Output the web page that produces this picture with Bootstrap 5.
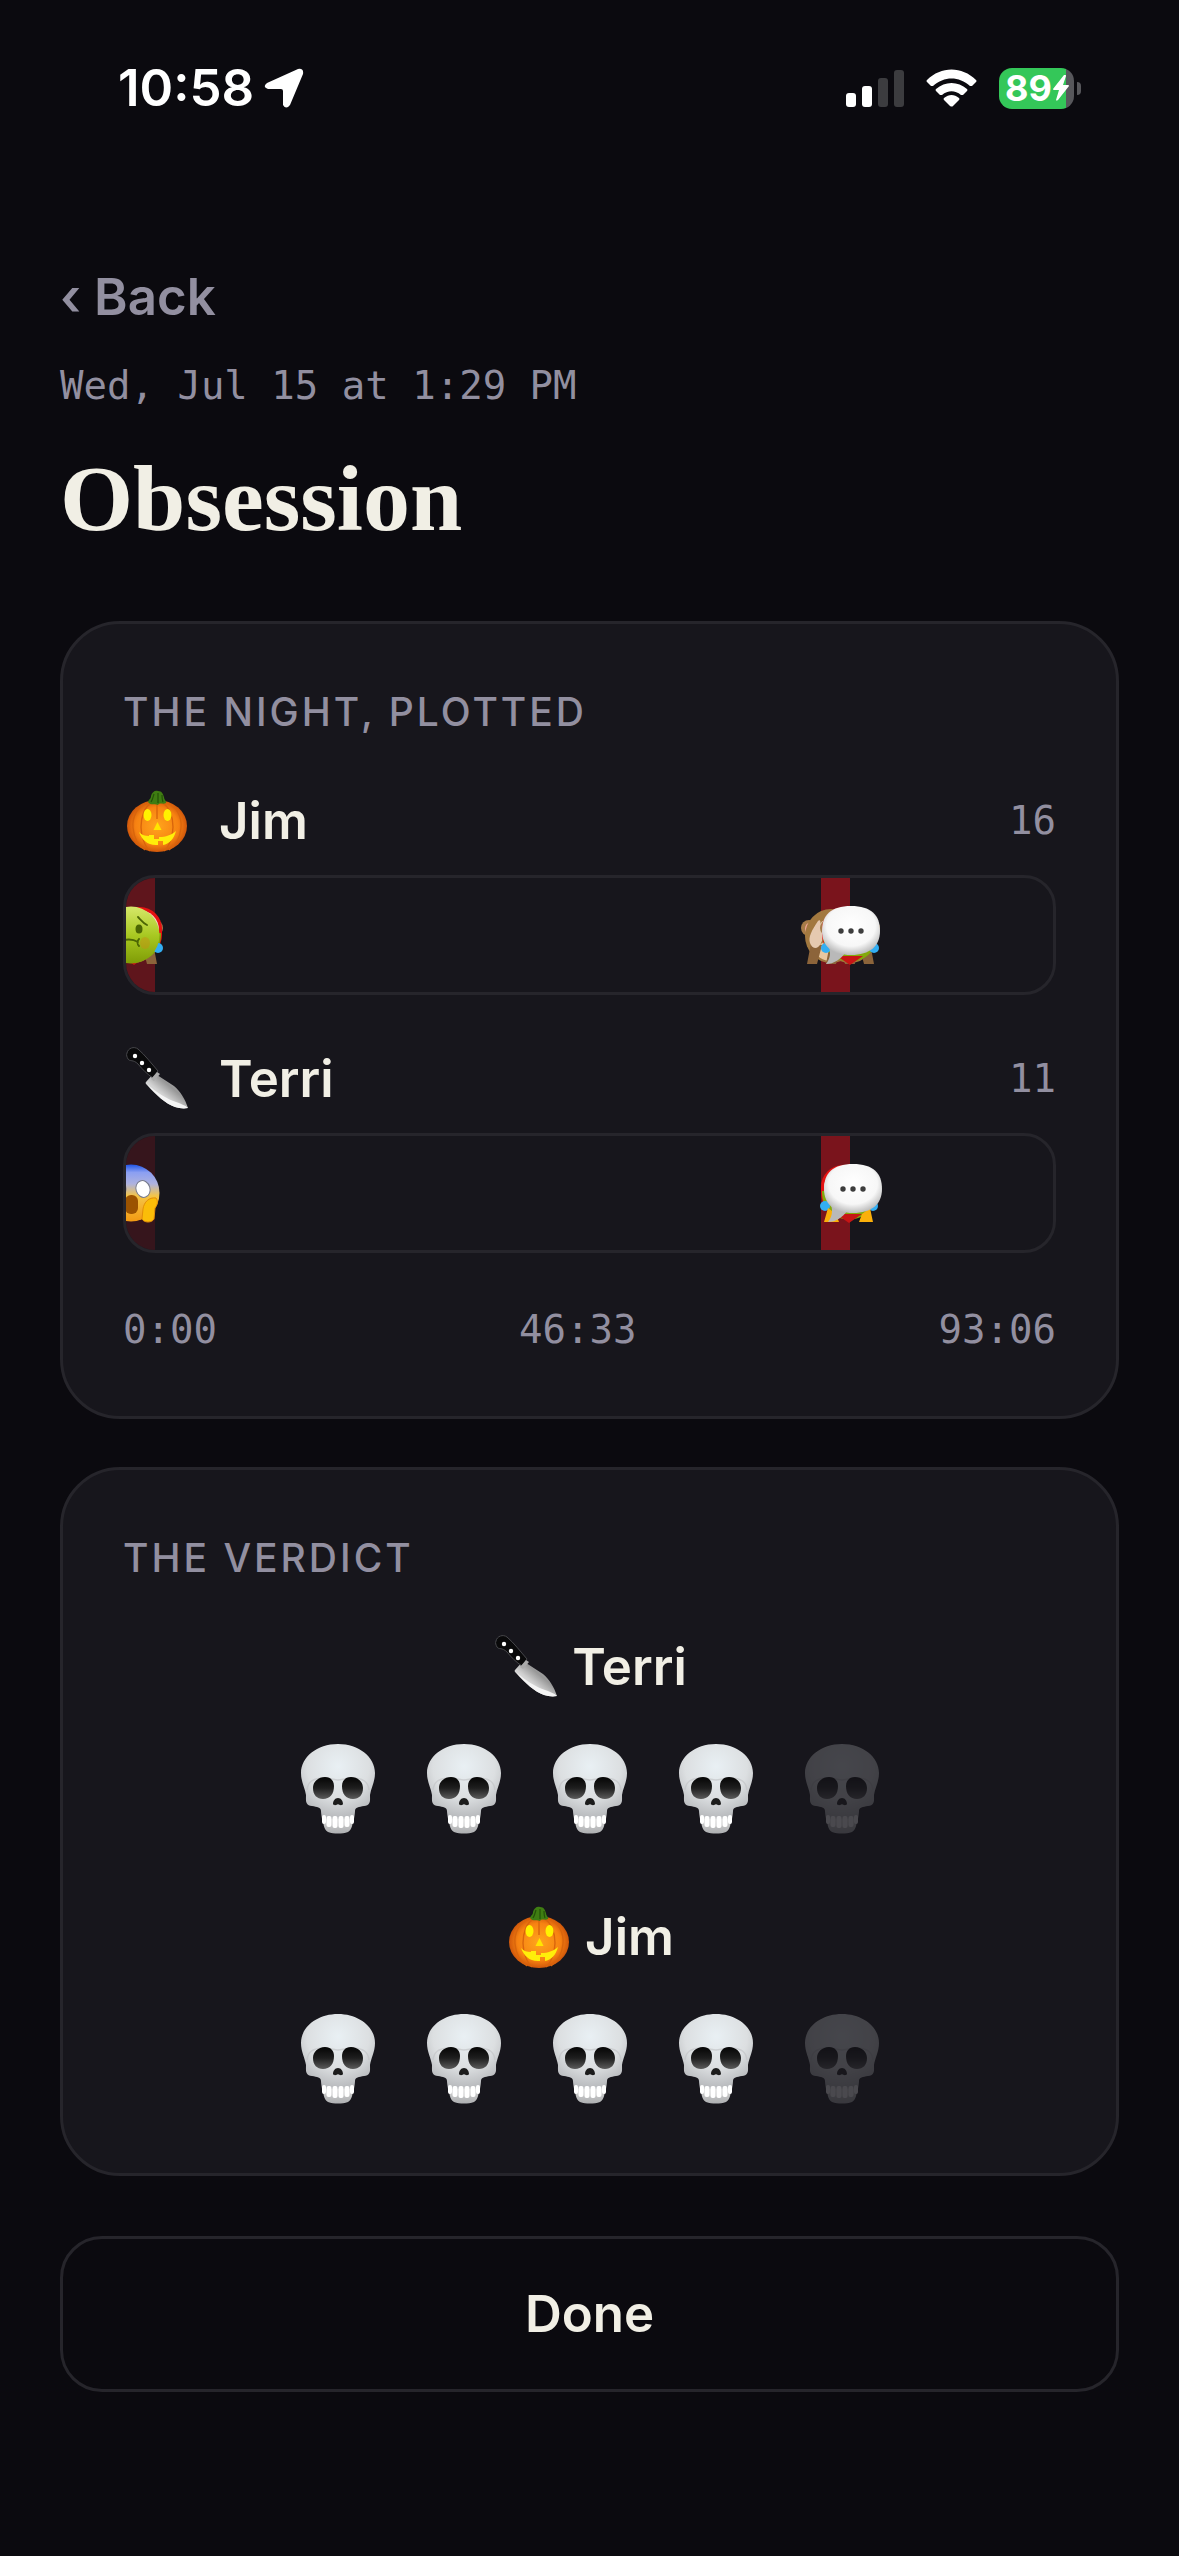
<!DOCTYPE html>
<html lang="en">
<head>
    <meta charset="UTF-8" />
    <meta name="viewport" content="width=device-width, initial-scale=1" />
    <title>Obsession</title>
    <link href="https://cdn.jsdelivr.net/npm/bootstrap@5.3.0/dist/css/bootstrap.min.css" rel="stylesheet"/>
    <style>
        :root {
            --ink: #0b0a0f;
            --panel: #17161c;
            --line: #26252b;
            --cream: #f1efe5;
            --muted: #928fa0;
        }
        body {
            background: var(--ink); color: var(--cream);
            font-family: Inter, "Liberation Sans", sans-serif;
            font-size: 51px; line-height: 60px; font-weight: 600;
        }
        svg { display: block; flex: none; }

        .status-bar { height: 176px; padding: 0 98px 0 118px; color: #fff; }
        .status-time { gap: 10px; }
        .status-icons { gap: 22px; }
        .battery { gap: 3px; }
        .battery-body {
            width: 75px; height: 41px; border-radius: 13px; padding-left: 6px;
            background: linear-gradient(to right, #34c759 89%, #57575b 89%);
            font-size: 36px; line-height: 41px; font-weight: 700;
        }
        .battery-nub { width: 4px; height: 13px; background: #57575b; border-radius: 0 6px 6px 0; }

        .screen { padding: 88px 60px 160px; }
        .back-btn { color: var(--muted); line-height: 66px; }
        .mono { font-family: "DejaVu Sans Mono", monospace; font-size: 39px; line-height: 52px; font-weight: 400; color: var(--muted); }
        .screen-date { margin-top: 30px; }
        .screen-title { font-family: "Liberation Serif", serif; font-size: 94px; line-height: 112px; font-weight: 700; margin: 30px 0 67px; }

        .panel { background: var(--panel); border: 3px solid var(--line); border-radius: 60px; padding: 60px; margin-bottom: 48px; }
        .panel-title { font-size: 39px; line-height: 56px; font-weight: 500; letter-spacing: 3px; color: var(--muted); margin-bottom: 48px; }
        .viewer + .viewer { margin-top: 51px; }
        .viewer-name { gap: 30px; }
        .track { height: 120px; margin-top: 21px; border: 3px solid var(--line); border-radius: 32px; }
        .bin { flex: 1; background: #94141d; }
        .pin { position: absolute; top: 50%; transform: translate(-50%, -50%); }
        .axis { margin-top: 51px; }

        .verdict + .verdict { margin-top: 61px; }
        .verdict-name { gap: 14px; }
        .skulls { gap: 18px; margin-top: 35px; }
        .skull-btn { width: 108px; height: 108px; border: 0; background: none; padding: 0; }
        .skull-btn.off { opacity: .22; }

        .done-btn { margin-top: 60px; height: 156px; border: 3px solid var(--line); border-radius: 42px; color: var(--cream); }
        .back-btn, .done-btn { font-size: 51px; font-weight: 600; }
        .back-btn:hover { color: var(--cream); }
        .done-btn:hover { background: var(--panel); color: var(--cream); }
    </style>
</head>
<body>

<!-- shared artwork -->
<svg width="0" height="0" class="position-absolute" aria-hidden="true">
    <defs>
        <radialGradient id="g-pumpkin" cx=".5" cy=".5" r=".55">
            <stop offset="0" stop-color="#ffa51c"/><stop offset=".65" stop-color="#f78212"/><stop offset="1" stop-color="#c24808"/>
        </radialGradient>
        <linearGradient id="g-blade" x1="0" y1="1" x2="1" y2="0">
            <stop offset="0" stop-color="#fff"/><stop offset=".4" stop-color="#d2d2d2"/><stop offset=".6" stop-color="#979797"/><stop offset="1" stop-color="#c8c8c8"/>
        </linearGradient>
        <radialGradient id="g-bone" cx=".5" cy=".3" r=".7">
            <stop offset="0" stop-color="#e9f0f4"/><stop offset=".6" stop-color="#dcdfe1"/><stop offset="1" stop-color="#b6b8bb"/>
        </radialGradient>
        <linearGradient id="g-jaw" x1="0" y1="0" x2="0" y2="1">
            <stop offset="0" stop-color="#dadada"/><stop offset=".55" stop-color="#cfcfcf"/><stop offset="1" stop-color="#aeb0b2"/>
        </linearGradient>
        <linearGradient id="g-socket" x1="0" y1="0" x2="0" y2="1">
            <stop offset="0" stop-color="#050505"/><stop offset=".5" stop-color="#1e1e1e"/><stop offset="1" stop-color="#5b5b5b"/>
        </linearGradient>
        <linearGradient id="g-sick" x1="0" y1="0" x2="0" y2="1">
            <stop offset="0" stop-color="#d6e86a"/><stop offset=".5" stop-color="#a9c922"/><stop offset="1" stop-color="#7f9c06"/>
        </linearGradient>
        <linearGradient id="g-fear" x1="0" y1="0" x2="0" y2="1">
            <stop offset="0" stop-color="#1f55e6"/><stop offset=".14" stop-color="#8b9ff2"/><stop offset=".34" stop-color="#aeb2df"/><stop offset=".55" stop-color="#f4c548"/><stop offset="1" stop-color="#f39a12"/>
        </linearGradient>
        <radialGradient id="g-bubble" cx=".5" cy=".4" r=".6">
            <stop offset="0" stop-color="#fff"/><stop offset=".7" stop-color="#f7f7f7"/><stop offset="1" stop-color="#bdbdbd"/>
        </radialGradient>
    </defs>

    <symbol id="pumpkin" viewBox="0 0 66 66">
        <ellipse cx="34" cy="38" rx="30" ry="26" fill="url(#g-pumpkin)"/>
        <g fill="none" stroke="#d9650c" stroke-width="1.4">
            <path d="M28 14C14 16 9 30 10 40s6 18 12 22"/><path d="M30 14c-9 4-12 16-12 25s4 20 9 24"/>
            <path d="M40 14c14 2 19 16 18 26s-6 18-12 22"/><path d="M38 14c9 4 12 16 12 25s-4 20-9 24"/><path d="M34 15v16"/>
        </g>
        <path d="M25 14c1-3 3-3 3-6 1-4 4-6 7-5 4 0 5 3 6 6 0 3 3 4 2 6-3 2-6-1-8 2-3-2-7 1-10-3z" fill="#3f7d12"/>
        <path d="M31 6c-1 3-1 5-3 8M35 5v10M39 7c0 3 0 5 1 7" fill="none" stroke="#245208" stroke-width="1.2"/>
        <ellipse cx="24.500" cy="27" rx="4" ry="6" fill="#fff200"/>
        <ellipse cx="44.500" cy="27" rx="4" ry="6" fill="#fff200"/>
        <path d="M34.500 34l4 8h-8z" fill="#ffe600"/>
        <path d="M16 44c3 3 6 4 10 4v-1h5v4h5v-2c7 0 12-2 17-6-2 8-7 13-13 14v-4h-5v4C25 58 19 52 16 44z" fill="#ffee0a"/>
    </symbol>

    <symbol id="knife" viewBox="0 0 66 66">
        <path d="M31 27l-8 9c-1 1 0 2 1 3 9 10 19 19 28 22 4 1 8 2 13 1-3-9-7-16-14-22z" fill="url(#g-blade)"/>
        <path d="M24 38c10 9 20 15 29 18 5 2 9 3 12 6-5 1-9 0-13-1-9-3-19-12-28-23z" fill="#f4f4f4"/>
        <path d="M4 7c1-5 7-7 11-4 7 6 13 14 20 22l-5 7c-6-4-10-8-15-14C10 13 7 16 5 13c-1-2-2-4-1-6z" fill="#09090a" stroke="#47474b"/>
        <path d="M34 26l-6 7 3 2 6-7z" fill="#aaa"/>
        <circle cx="12" cy="10" r="2.200" fill="#fff"/><circle cx="19" cy="17" r="2.200" fill="#fff"/><circle cx="26" cy="24" r="2.200" fill="#fff"/>
    </symbol>

    <symbol id="skull" viewBox="0 0 74 90">
        <path d="M20 60l1 14c2 5 1 11 6 14 6 2 14 2 20 0 5-3 4-9 6-14l1-14z" fill="url(#g-jaw)"/>
        <path d="M37 0C58 0 74 13 74 29c0 9-4 15-5 22 0 6 1 10-6 11-5 1-9 1-9 5l-1 8H21l-1-8c0-4-4-4-9-5-7-1-6-5-6-11C4 44 0 38 0 29 0 13 16 0 37 0z" fill="url(#g-bone)"/>
        <path d="M6 46c1-9 6-11 15-12 8 0 12 2 16 2s8-2 16-2c9 1 14 3 15 12" fill="none" stroke="#c3c5c8" stroke-width="1.500" opacity=".7"/>
        <path d="M12 44c0-6 5-11 12-11 6 0 9 4 9 9 0 8-4 13-11 13-6 0-10-4-10-11zM62 44c0-6-5-11-12-11-6 0-9 4-9 9 0 8 4 13 11 13 6 0 10-4 10-11z" fill="url(#g-socket)"/>
        <path d="M37 54c3 0 5 3 5 6-1 2-4 1-5 0-1 1-4 2-5 0 0-3 2-6 5-6z" fill="#1c1c1c"/>
        <g fill="#fff">
            <rect x="21" y="71" width="4" height="9" rx="2"/><rect x="25.500" y="72" width="5" height="11" rx="2"/><rect x="31.500" y="72" width="5" height="12" rx="2"/>
            <rect x="37.500" y="72" width="5" height="12" rx="2"/><rect x="43.500" y="72" width="5" height="11" rx="2"/><rect x="49" y="71" width="4" height="9" rx="2"/>
        </g>
    </symbol>

    <symbol id="sick" viewBox="0 0 60 60">
        <circle cx="30" cy="30" r="28.500" fill="url(#g-sick)"/>
        <ellipse cx="44" cy="38" rx="5" ry="6" fill="#c88d12" opacity=".45"/>
        <ellipse cx="22" cy="24" rx="3" ry="4.500" fill="#4c6604"/><ellipse cx="38" cy="24" rx="3.500" ry="4.500" fill="#4c6604"/>
        <path d="M37 12c3 3 5 6 9 8M22 12c-3 3-5 6-9 8M18 38c6-5 14-4 19-1M38 34c-2 2-2 5 0 7" fill="none" stroke="#4c6604" stroke-width="1.800" stroke-linecap="round"/>
    </symbol>

    <symbol id="fear" viewBox="0 0 60 60">
        <circle cx="30" cy="30" r="28.500" fill="url(#g-fear)"/>
        <ellipse cx="18" cy="26" rx="7" ry="8.500" fill="#fff" stroke="#777b8c"/>
        <ellipse cx="42" cy="26" rx="7" ry="8.500" fill="#fff" stroke="#777b8c" transform="rotate(-18 42 26)"/>
        <rect x="24" y="32" width="13" height="19" rx="6" fill="#9c5300"/>
        <path d="M55 35c-7-1-12 4-13 11l-1 10c2 4 10 4 12 0l1-11c3-4 3-7 1-10zM5 35c7-1 12 4 13 11l1 10c-2 4-10 4-12 0L6 45c-3-4-3-7-1-10z" fill="#fbbd08" stroke="#e28e09"/>
    </symbol>

    <symbol id="monkey" viewBox="0 0 60 60">
        <circle cx="8" cy="23" r="8" fill="#a67b48"/><ellipse cx="8" cy="24" rx="4" ry="6" fill="#f0a596"/>
        <circle cx="52" cy="23" r="8" fill="#a67b48"/><ellipse cx="52" cy="24" rx="4" ry="6" fill="#f0a596"/>
        <ellipse cx="30" cy="31" rx="26" ry="27" fill="#a2783f"/>
        <ellipse cx="30" cy="46" rx="15" ry="10" fill="#e8c7a0"/>
        <path d="M10 38L6 59h10l5-19zM50 38l4 21H44l-5-19z" fill="#8c643a"/>
        <path d="M9 38c-2-6 2-13 8-22 2-2 3 0 2 3 3-5 5-3 3 1l-2 5c3-4 5-2 4 1-2 7-4 16-9 17-3 0-5-2-6-5zM51 38c2-6-2-13-8-22-2-2-3 0-2 3-3-5-5-3-3 1l2 5c-3-4-5-2-4 1 2 7 4 16 9 17 3 0 5-2 6-5z" fill="#e5c9b0"/>
    </symbol>

    <symbol id="party" viewBox="0 0 60 60">
        <rect x="2" y="2" width="56" height="50" rx="22" fill="#e51212"/>
        <rect x="5" y="5" width="50" height="46" rx="20" fill="#f6d6cc"/>
        <path d="M3 28c-1 38 55 38 54 0z" fill="#83a90a"/>
        <path d="M17 51h26L30 60z" fill="#c71515"/>
        <circle cx="6" cy="43" r="5" fill="#33aef2"/><circle cx="54" cy="43" r="5" fill="#33aef2"/>
    </symbol>

    <symbol id="hands" viewBox="0 0 60 60">
        <path d="M9 45l-4 14h15l-3-8zM51 45l3 14H40l3-8z" fill="#fbb00a"/>
    </symbol>

    <symbol id="bubble" viewBox="0 0 60 60">
        <path d="M8 42c2 6 1 12-3 17 8 0 15-5 19-11z" fill="#b9b9b9"/>
        <path d="M30 1c20 0 29 9 29 25 0 15-10 24-29 24S1 41 1 26C1 10 10 1 30 1z" fill="url(#g-bubble)"/>
        <circle cx="20" cy="26" r="2.700" fill="#3d3d3d"/><circle cx="30" cy="26" r="2.700" fill="#3d3d3d"/><circle cx="40" cy="26" r="2.700" fill="#3d3d3d"/>
    </symbol>
</svg>

<header class="status-bar d-flex justify-content-between align-items-center">
    <div class="status-time d-flex align-items-center">
        <span>10:58</span>
        <svg width="40" height="40" viewBox="0 0 40 40"><path d="M3 15L34 1q6-1 5 5L26 37q-4 5-7 0V23q0-2-2-2H4q-6-2-1-6z" fill="#fff"/></svg>
    </div>
    <div class="status-icons d-flex align-items-center">
        <svg width="58" height="38" viewBox="0 0 58 38">
            <rect x="0" y="24" width="10" height="14" rx="3" fill="#fff"/>
            <rect x="16" y="17" width="10" height="21" rx="3" fill="#fff"/>
            <rect x="32" y="9" width="10" height="29" rx="3" fill="#3c3c3f"/>
            <rect x="48" y="1" width="10" height="37" rx="3" fill="#3c3c3f"/>
        </svg>
        <svg width="51" height="38" viewBox="0 0 51 38" fill="#fff">
            <path d="M1 11C15-3 36-3 50 11q1 1 0 2l-4 4q-1 0-2 0C33 7 18 7 7 17q-1 0-2 0l-4-4q-1-1 0-2z"/>
            <path d="M10 20c9-8 22-8 31 0q1 1 0 2l-4 4q-1 0-2 0c-6-5-13-5-19 0q-1 0-2 0l-4-4q-1-1 0-2z"/>
            <path d="M18 29c5-4 10-4 15 0q1 1 0 2l-6 6q-1 1-3 0l-6-6q-1-1 0-2z"/>
        </svg>
        <div class="battery d-flex align-items-center">
            <div class="battery-body d-flex align-items-center">
                <span>89</span>
                <svg width="18" height="26" viewBox="0 0 18 26"><path d="M12 0L1 14q0 1 1 1h5L4 25q0 1 2 0l11-14q0-1-1-1h-5l3-9q0-2-2-1z" fill="#fff"/></svg>
            </div>
            <span class="battery-nub"></span>
        </div>
    </div>
</header>

<main class="screen">
    <button type="button" class="back-btn btn border-0 p-0 d-block">‹ Back</button>
    <div class="screen-date mono">Wed, Jul 15 at 1:29 PM</div>
    <h1 class="screen-title">Obsession</h1>

    <section class="panel">
        <h2 class="panel-title text-uppercase">The night, plotted</h2>
        <div id="viewer-list"></div>
        <div class="axis mono d-flex justify-content-between">
            <span>0:00</span>
            <span>46:33</span>
            <span>93:06</span>
        </div>
    </section>

    <section class="panel mb-0">
        <h2 class="panel-title text-uppercase">The verdict</h2>
        <div id="verdict-list"></div>
    </section>

    <button type="button" class="done-btn btn w-100 p-0">Done</button>
</main>

<script src="https://cdn.jsdelivr.net/npm/bootstrap@5.3.0/dist/js/bootstrap.bundle.min.js"></script>
<script>
    const viewerList = document.getElementById('viewer-list');
    const verdictList = document.getElementById('verdict-list');
    const BIN_COUNT = 32;

    // heat: bin index -> strength, pins: [icon, percent of the runtime]
    const viewers = [
        {
            name: 'Jim', icon: 'pumpkin', count: 16, skulls: 4,
            heat: { 0: 0.58, 24: 0.8 },
            pins: [['monkey', 0.8], ['party', 0.9], ['sick', 0.5], ['monkey', 76], ['monkey', 78.1], ['party', 78.1], ['bubble', 78.2]]
        },
        {
            name: 'Terri', icon: 'knife', count: 11, skulls: 4,
            heat: { 0: 0.25, 24: 0.8 },
            pins: [['fear', 0.5], ['party', 78], ['hands', 78], ['bubble', 78.4]]
        }
    ];

    function icon(name, width, height) {
        return `<svg width="${width}" height="${height}" aria-hidden="true"><use href="#${name}"/></svg>`;
    }

    function renderViewer(viewer) {
        const div = document.createElement('div');
        div.className = 'viewer';
        let bins = '';
        for (let i = 0; i < BIN_COUNT; i++) {
            bins += `<span class="bin" style="opacity: ${viewer.heat[i] || 0}"></span>`;
        }
        const pins = viewer.pins.map(([name, at]) =>
            `<span class="pin" style="left: ${at}%">${icon(name, 60, 60)}</span>`).join('');
        div.innerHTML = `
            <div class="d-flex justify-content-between align-items-center">
                <div class="viewer-name d-flex align-items-center">${icon(viewer.icon, 66, 66)}<span>${viewer.name}</span></div>
                <span class="mono">${viewer.count}</span>
            </div>
            <div class="track d-flex position-relative overflow-hidden">${bins}${pins}</div>
        `;
        viewerList.appendChild(div);
    }

    function renderVerdict(viewer) {
        const div = document.createElement('div');
        div.className = 'verdict';
        let skulls = '';
        for (let i = 1; i <= 5; i++) {
            const off = i > viewer.skulls ? ' off' : '';
            skulls += `<button type="button" class="skull-btn d-flex justify-content-center align-items-center${off}" aria-label="${i} of 5">${icon('skull', 74, 90)}</button>`;
        }
        div.innerHTML = `
            <div class="verdict-name d-flex justify-content-center align-items-center">${icon(viewer.icon, 66, 66)}<span>${viewer.name}</span></div>
            <div class="skulls d-flex justify-content-center">${skulls}</div>
        `;
        verdictList.appendChild(div);
    }

    viewers.forEach(renderViewer);
    [...viewers].reverse().forEach(renderVerdict);
</script>
</body>
</html>
